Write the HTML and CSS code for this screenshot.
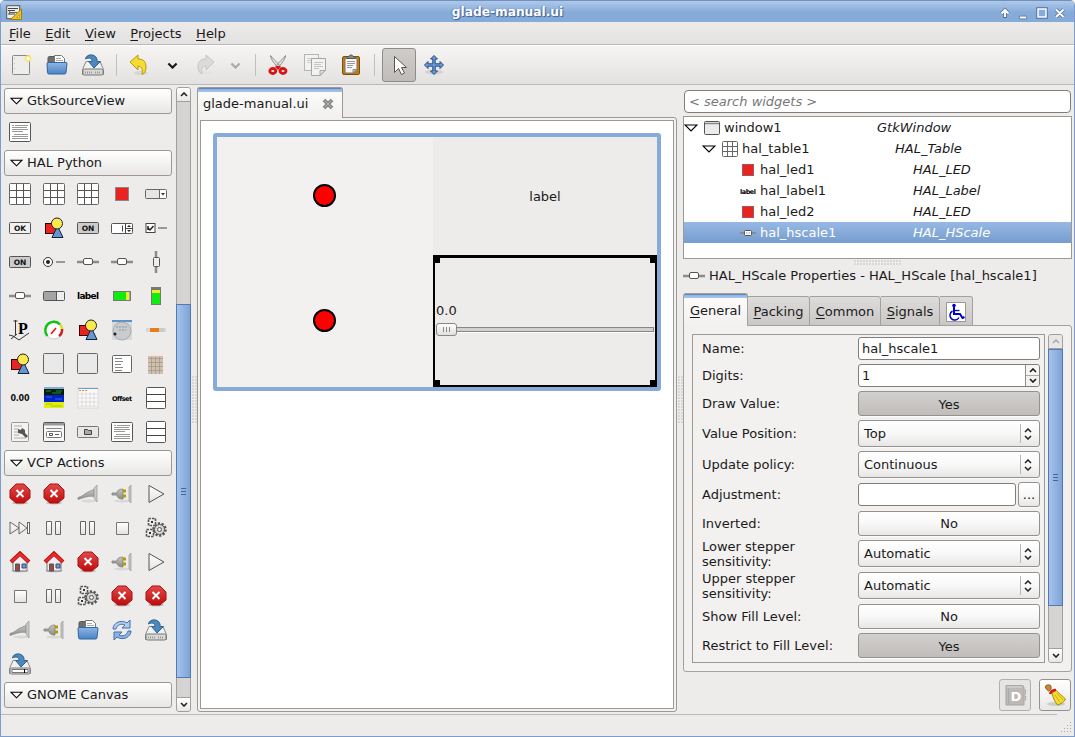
FILE: index.html
```html
<!DOCTYPE html>
<html lang="en">
<head>
<meta charset="utf-8">
<title>glade-manual.ui</title>
<link rel="stylesheet" href="styles.css">
</head>
<body>
<svg class="defs" aria-hidden="true">
<defs>
<linearGradient id="gw" x1="0" y1="0" x2="0" y2="1"><stop offset="0" stop-color="#fff"/><stop offset="1" stop-color="#e2e2e2"/></linearGradient>
<linearGradient id="gb" x1="0" y1="0" x2="0" y2="1"><stop offset="0" stop-color="#8fb5e3"/><stop offset="1" stop-color="#4a83c6"/></linearGradient>
<linearGradient id="gr" x1="0" y1="0" x2="0" y2="1"><stop offset="0" stop-color="#e04a4a"/><stop offset="1" stop-color="#c00c0c"/></linearGradient>
<linearGradient id="gg" x1="0" y1="0" x2="0" y2="1"><stop offset="0" stop-color="#c4c6c2"/><stop offset="1" stop-color="#8b8d88"/></linearGradient>
</defs>
<symbol id="down" viewBox="0 0 14 8"><path d="M1 1H13L7 7Z" fill="#fff" stroke="#000" stroke-width="1.2"/></symbol>
<symbol id="source" viewBox="0 0 22 22"><rect x=".5" y="1.500" width="21" height="19" rx="1" fill="#fff" stroke="#555753"/><path d="M3 4.500h2M6 4.500h13M3 6.500h15M3 8.500h16M3 10.500h11M5 13.500h14M3 15.500h16M3 17.500h16" stroke="#999"/></symbol>
<symbol id="grid" viewBox="0 0 22 22"><rect x=".5" y=".5" width="21" height="21" rx="1" fill="#fff" stroke="#666"/><path d="M7.500 1v20M14.500 1v20M1 7.500h20M1 14.500h20" stroke="#555"/></symbol>
<symbol id="grid16" viewBox="0 0 16 16"><rect x=".5" y=".5" width="15" height="15" rx="1" fill="#fff" stroke="#666"/><path d="M5.500 1v14M10.500 1v14M1 5.500h14M1 10.500h14" stroke="#666"/></symbol>
<symbol id="led" viewBox="0 0 22 22"><rect x="4.500" y="4.500" width="13" height="13" fill="#e92222" stroke="#888"/></symbol>
<symbol id="led16" viewBox="0 0 16 16"><rect x="2.500" y="2.500" width="11" height="11" fill="#e92222" stroke="#a55"/></symbol>
<symbol id="combo" viewBox="0 0 22 22"><rect x=".5" y="6.500" width="21" height="9" rx="1" fill="#e6e6e6" stroke="#666"/><path d="M15 7h6v8h-6z" fill="#fff"/><path d="M14.500 7v8" stroke="#666"/><path d="M16 10h4l-2 2.500z" fill="#333"/></symbol>
<symbol id="ok" viewBox="0 0 22 22"><rect x=".5" y="5.500" width="21" height="11" rx="1" fill="#f1f1f1" stroke="#555"/></symbol>
<symbol id="on" viewBox="0 0 22 22"><rect x=".5" y="5.500" width="21" height="11" rx="1" fill="#ccc" stroke="#555"/></symbol>
<symbol id="shapes" viewBox="0 0 22 22"><rect x="2.500" y="6.500" width="11" height="10" fill="#e92222" stroke="#300"/><path d="M14.500 9L20 20.500H9Z" fill="#6496d2" stroke="#123"/><circle cx="14" cy="6.500" r="5.500" fill="#fce94f" stroke="#222"/></symbol>
<symbol id="spin" viewBox="0 0 22 22"><rect x=".5" y="6.500" width="21" height="10" rx="1" fill="#fff" stroke="#555"/><path d="M14.500 7v9M15 11.500h6M11.500 8.500v6" stroke="#444"/><path d="M16 10l2-2 2 2zM16 13l2 2 2-2z" fill="#222"/></symbol>
<symbol id="check" viewBox="0 0 22 22"><rect x="1" y="6.500" width="9" height="9" fill="#fff" stroke="#444"/><path d="M3 11l2 2 3.500-4M3 9v4" stroke="#222" stroke-width="1.500" fill="none"/><path d="M13 11h9" stroke="#999" stroke-width="2"/></symbol>
<symbol id="radio" viewBox="0 0 22 22"><circle cx="5" cy="11" r="4.500" fill="#fff" stroke="#333"/><circle cx="5" cy="11" r="2" fill="#222"/><path d="M13 11h9" stroke="#999" stroke-width="2"/></symbol>
<symbol id="hscale" viewBox="0 0 22 22"><path d="M0 11h22" stroke="#8b8b8b" stroke-width="2.500"/><rect x="6.500" y="7.500" width="9" height="6" rx="1.500" fill="#fff" stroke="#555"/></symbol>
<symbol id="hscale16" viewBox="0 0 16 16"><path d="M0 8h16" stroke="#8b8b8b" stroke-width="2"/><rect x="4.500" y="5.500" width="7" height="5" rx="1" fill="#fff" stroke="#555"/><path d="M6 8h4" stroke="#999" stroke-dasharray="1 .5"/></symbol>
<symbol id="vscale" viewBox="0 0 22 22"><path d="M11 0v22" stroke="#8b8b8b" stroke-width="2.500"/><rect x="8.500" y="6.500" width="6" height="9" rx="1" fill="#eee" stroke="#555"/></symbol>
<symbol id="progress" viewBox="0 0 22 22"><rect x=".5" y="6.500" width="21" height="9" rx="1" fill="#eee" stroke="#555"/><path d="M1 7h12v8H1z" fill="#a4a4a4"/><path d="M13.500 7v8" stroke="#555"/></symbol>
<symbol id="hbar" viewBox="0 0 22 22"><path d="M2 6h18v10H2z" fill="#777"/><path d="M3 7h12v8H3z" fill="#10ec10"/><path d="M15 7h3v8h-3z" fill="#ee2"/><path d="M18 7h1v8h-1z" fill="#aaa"/></symbol>
<symbol id="vbar" viewBox="0 0 22 22"><path d="M6 2h10v18H6z" fill="#777"/><path d="M7 8h8v11H7z" fill="#10ec10"/><path d="M7 5h8v3H7z" fill="#ee2"/></symbol>
<symbol id="plot" viewBox="0 0 22 22"><path d="M6.500 1v15M4.500 2h4M0 16l4 1 6 4 10-7M2 20l6-5" fill="none" stroke="#333"/></symbol>
<symbol id="meter" viewBox="0 0 22 22"><circle cx="11" cy="11" r="9" fill="#fff" stroke="#ccc"/><path d="M4.500 17A8 8 0 1 1 17 5.500" fill="none" stroke="#12c412" stroke-width="2.500"/><path d="M17 5.500A8 8 0 0 1 19 10" fill="none" stroke="#dd2" stroke-width="2.500"/><path d="M19 10A8 8 0 0 1 16 17" fill="none" stroke="#c22" stroke-width="2.500"/><path d="M8 15l5-6" stroke="#e11" stroke-width="1.500"/></symbol>
<symbol id="dial" viewBox="0 0 22 22"><path d="M1 1h20v20H1z" fill="#d4dae0"/><path d="M1 1h20v2H1z" fill="#5f91ce"/><circle cx="11" cy="12" r="9" fill="#c9cbcc" stroke="#aaa"/><path d="M5 8h12M8 11h7" stroke="#8794a5" stroke-dasharray="2 1"/><circle cx="4" cy="15" r="1.500" fill="#222"/></symbol>
<symbol id="orange" viewBox="0 0 22 22"><path d="M1 9h20v4H1z" fill="#dbd6d1"/><path d="M5 9h9v4H5z" fill="#e87e15"/><path d="M14 9h5v4h-5z" fill="#c7ccd0"/></symbol>
<symbol id="box" viewBox="0 0 22 22"><rect x=".5" y=".5" width="20" height="20" rx="1" fill="#e9e9e9" stroke="#666"/></symbol>
<symbol id="list" viewBox="0 0 22 22"><rect x="1.500" y="2.500" width="19" height="17" rx="1" fill="#fff" stroke="#666"/><path d="M4 5.500h7M4 8.500h8M4 11.500h6M4 14.500h8M4 17.500h7" stroke="#888"/></symbol>
<symbol id="calc" viewBox="0 0 22 22"><path d="M3 1h15v20H3z" fill="#cfc1b0"/><path d="M3 1h15v2H3z" fill="#f6e6de"/><path d="M3 5.500h15M3 9.500h15M3 13.500h15M3 17.500h15M6.500 4v17M10.500 4v17M14.500 4v17" stroke="#a09385" stroke-width=".7"/></symbol>
<symbol id="dro" viewBox="0 0 22 22"><path d="M1 1h20v8H1z" fill="#061a0c"/><path d="M1 0h20v2H1z" fill="#82add8"/><path d="M1 8h20v7H1z" fill="#0420c8"/><path d="M1 15h20v6H1z" fill="#e1ed10"/><path d="M3 4h5M13 4h6M9 6h9" stroke="#0b9b3b" stroke-width="1.200"/><path d="M3 10h6M12 12h7" stroke="#2874d9" stroke-width="1.200"/><path d="M3 17h6M8 19h11" stroke="#9fc910"/></symbol>
<symbol id="cal" viewBox="0 0 22 22"><path d="M1 1h20v20H1z" fill="#fafafa" stroke="#c9c9c9" stroke-width=".6"/><path d="M1 1h20v1H1z" fill="#6f9cd1"/><path d="M2 3.500h9" stroke="#e97f55" stroke-dasharray="2 1"/><path d="M2 7h18M2 11h18M2 15h18M2 19h18M5 5v15M9 5v15M13 5v15M17 5v15" stroke="#cfcfcf" stroke-width=".6"/></symbol>
<symbol id="vbox" viewBox="0 0 22 22"><rect x="1.500" y=".5" width="19" height="21" rx="1" fill="#fff" stroke="#555"/><path d="M2 7.500h18M2 14.500h18" stroke="#444"/></symbol>
<symbol id="tool" viewBox="0 0 22 22"><rect x="2.500" y="1.500" width="17" height="19" rx="1" fill="#f3f3f3" stroke="#999"/><path d="M5 5h8M5 8h4M5 11h4M5 14h5M5 17h12" stroke="#aaa"/><path d="M9 8l3 1 1-2 3 2v3l3 3-2 2-4-4-4-1z" fill="#555"/></symbol>
<symbol id="dialog" viewBox="0 0 22 22"><rect x=".5" y="1.500" width="21" height="19" rx="1" fill="#f7f7f7" stroke="#555"/><path d="M1 2h20v2.500H1z" fill="#999"/><path d="M3 7.500h16" stroke="#888"/><rect x="3.500" y="10.500" width="15" height="6" rx="1" fill="#fff" stroke="#777"/><path d="M6.500 12.500h3v2h-3zM12 13.500h4" fill="none" stroke="#555"/></symbol>
<symbol id="filebtn" viewBox="0 0 22 22"><rect x=".5" y="5.500" width="21" height="11" rx="1" fill="#e6e6e6" stroke="#777"/><path d="M7.500 13.500v-5h3l1 1h3v4z" fill="#aaa" stroke="#444"/></symbol>
<symbol id="stop" viewBox="0 0 22 22"><ellipse cx="11" cy="20" rx="8" ry="1.500" fill="#bbb"/><path d="M7 1h8l6 6v8l-6 5H7l-6-5V7z" fill="url(#gr)" stroke="#a11"/><path d="M7.500 7l7 7M14.500 7l-7 7" stroke="#fff" stroke-width="2"/></symbol>
<symbol id="cable" viewBox="0 0 22 22"><ellipse cx="12" cy="18" rx="8" ry="1.500" fill="#d8d8d6"/><path d="M1 14.500c4-1 6-3 9-5l7-3v7c-5-1-10 1-16 3z" fill="url(#gg)" stroke="#888" stroke-width=".7"/><path d="M17 5l3-3v17l-3-4z" fill="#c8cac6" stroke="#999" stroke-width=".7"/></symbol>
<symbol id="plug" viewBox="0 0 22 22"><ellipse cx="11" cy="18" rx="8" ry="1.500" fill="#d8d8d6"/><path d="M1 10h5c0-3 3-4 6-4v10c-3 0-6-1-6-4H1z" fill="url(#gg)" stroke="#777" stroke-width=".7"/><path d="M12 8h3M12 13h3" stroke="#b89a00" stroke-width="3"/><path d="M18 4l2-2v18l-2-2z" fill="#c8cac6" stroke="#999" stroke-width=".7"/></symbol>
<symbol id="play" viewBox="0 0 22 22"><path d="M4 2.500l15 8.500-15 8.500z" fill="url(#gw)" stroke="#555753"/></symbol>
<symbol id="next" viewBox="0 0 22 22"><path d="M1 5l9 6-9 6zM10 5l8 6-8 6z" fill="url(#gw)" stroke="#666"/><rect x="18.500" y="5.500" width="2" height="11" fill="#fff" stroke="#666"/></symbol>
<symbol id="pause" viewBox="0 0 22 22"><path d="M3.500 4.500h5v13h-5zM12.500 4.500h5v13h-5z" fill="url(#gw)" stroke="#666"/></symbol>
<symbol id="sq" viewBox="0 0 22 22"><path d="M5.500 5.500h12v12h-12z" fill="url(#gw)" stroke="#777"/></symbol>
<symbol id="gears" viewBox="0 0 22 22"><g fill="#eee" stroke="#555"><circle cx="14.500" cy="12.500" r="6" stroke-width="2.500" stroke-dasharray="2.200 1.500"/><circle cx="14.500" cy="12.500" r="5" fill="#d6d8d4"/><circle cx="14.500" cy="12.500" r="2"/><rect x="3.500" y="1.500" width="7" height="7" stroke-width="1.600" stroke-dasharray="2.500 1"/><rect x="1.500" y="12.500" width="7" height="7" stroke-width="1.600" stroke-dasharray="2.500 1"/></g><path d="M6 4h2v2H6zM4 15h2v2H4z" fill="#333"/></symbol>
<symbol id="home" viewBox="0 0 22 22"><ellipse cx="11" cy="20" rx="9" ry="1.500" fill="#ccc"/><path d="M4 9l7-6 7 6v11H4z" fill="#eee" stroke="#777"/><path d="M6.500 13h4v7h-4z" fill="#9a4945" stroke="#555"/><path d="M13 13h4v4h-4z" fill="#6d9ad0" stroke="#447"/><path d="M2 11l9-8.500L20 11" fill="none" stroke="#a11" stroke-width="4"/><path d="M2.500 10.500L11 3l8.500 7.500" fill="none" stroke="#ef2929" stroke-width="2.500"/></symbol>
<symbol id="open" viewBox="0 0 22 22"><path d="M2 4q0-1.500 1.500-1.500h5l1 2H18V18H2z" fill="#6d706b" stroke="#555"/><path d="M8.500 1.500h7l3 3V12h-10z" fill="#fff" stroke="#777"/><path d="M10 4.500h5M10 6.500h7" stroke="#aaa"/><path d="M1 9.500q0-1 1-1h18q1 0 1 1l-1 9q0 1.500-1.500 1.500H3q-1.500 0-1.500-1.500z" fill="url(#gb)" stroke="#3465a4"/></symbol>
<symbol id="refresh" viewBox="0 0 22 22"><path d="M2 10C2 4 10 0 16 4l3-3v8h-8l3-3C10 4 6 6 5 10z" fill="#b4cde9" stroke="#3c6eb4"/><path d="M20 12c0 6-8 10-14 6l-3 3v-8h8l-3 3c4 2 8 0 9-4z" fill="#8fb3df" stroke="#3c6eb4"/></symbol>
<symbol id="save" viewBox="0 0 22 22"><path d="M4 7.500h14l3.500 8v5H.5v-5z" fill="#f1f2f0" stroke="#888"/><rect x="1" y="15" width="20" height="6" rx="1.500" fill="#d9dad7" stroke="#777"/><path d="M3 18.500h8M13 18.500h6" stroke="#999" stroke-width="2" stroke-dasharray="1 1"/><path d="M3.500 5C4 0 13-1 15 5v2.500h3.500L12 14 6.500 7.500H10C10 4 7 3 3.500 5z" fill="#4c88bd" stroke="#30648f"/></symbol>
<symbol id="saveas" viewBox="0 0 22 22"><path d="M4 7.500h14l3.500 8v5H.5v-5z" fill="#f1f2f0" stroke="#888"/><rect x="1" y="15" width="20" height="6" rx="1.500" fill="#d9dad7" stroke="#777"/><path d="M3 16.500h16v3H3z" fill="#fff" stroke="#777"/><path d="M15.500 16v4" stroke="#000"/><path d="M3.500 5C4 0 13-1 15 5v2.500h3.500L12 14 6.500 7.500H10C10 4 7 3 3.500 5z" fill="#4c88bd" stroke="#30648f"/></symbol>
<symbol id="new" viewBox="0 0 22 22"><rect x="2.500" y="1.500" width="17" height="19" rx="1" fill="#ededeb" stroke="#888"/><path d="M4.500 4v15" stroke="#bbb" stroke-dasharray="1 4"/><circle cx="18" cy="4.500" r="2.500" fill="#fffef0" stroke="#f6e768" stroke-width="1.500"/></symbol>
<symbol id="undo" viewBox="0 0 22 22"><ellipse cx="13" cy="19" rx="7" ry="2" fill="#d5d5d3"/><path d="M2 8l8-7v4c6 0 8 3 8 8 0 3-1 6-4 7.500 1-5 0-8-4-8.500v4z" fill="#f5dc31" stroke="#b79b05"/></symbol>
<symbol id="redo" viewBox="0 0 22 22"><ellipse cx="9" cy="19" rx="7" ry="1.500" fill="#e2e2e0"/><path d="M18 8l-8-7v4c-6 0-8 3-8 8 0 3 1 5 4 7-1-5 0-8 4-8v4z" fill="#dadcd9" stroke="#c4c6c3"/></symbol>
<symbol id="cut" viewBox="0 0 22 22"><path d="M3.500 1.500c0 4 5 9 8 13l2-2C10 8 6 5 3.500 1.500zM18.500 1.500c0 4-5 9-8 13l-2-2c3.500-4.500 7.500-7.500 10-11z" fill="#e6e6e4" stroke="#8b8d89"/><path d="M8 13l3-1.500L14 13l-3 3z" fill="#d81414"/><ellipse cx="5.800" cy="17" rx="3" ry="2.500" fill="none" stroke="#d81414" stroke-width="2.800"/><ellipse cx="16" cy="17" rx="3" ry="2.500" fill="none" stroke="#d81414" stroke-width="2.800"/></symbol>
<symbol id="copy" viewBox="0 0 22 22"><rect x=".5" y=".5" width="14" height="16" fill="#f2f2f0" stroke="#b5b5b3"/><path d="M3 4.500h9M3 6.500h7M3 8.500h9" stroke="#d0d0ce"/><path d="M7.500 4.500h14v12l-5 5h-9z" fill="#f2f2f0" stroke="#a5a5a3"/><path d="M10 8.500h9M10 10.500h7M10 12.500h9M10 14.500h5" stroke="#c5c5c3"/><path d="M21 16.500h-5v5z" fill="#ddd" stroke="#aaa"/></symbol>
<symbol id="paste" viewBox="0 0 22 22"><rect x="2.500" y="2.500" width="17" height="18" rx="1.500" fill="#c17d11" stroke="#7e4f05"/><path d="M5 4.500h12v11l-4 3.500H5z" fill="#f7f7f5" stroke="#777"/><path d="M7 7.500h8M7 9.500h8M7 11.500h6M7 13.500h5" stroke="#999"/><path d="M17 15.500h-4V19z" fill="#ccc" stroke="#888"/><path d="M7 4.500v-2h2c0-2 4-2 4 0h2v2z" fill="#888a85" stroke="#555"/></symbol>
<symbol id="pointer" viewBox="0 0 22 22"><path d="M6.500 2.500v16l4-4 3 6 3-1.500-3-5.500h5z" fill="#fff" stroke="#555"/></symbol>
<symbol id="move" viewBox="0 0 22 22"><ellipse cx="11" cy="18" rx="9" ry="2.500" fill="#d2d2d0"/><path d="M11 1.500l3.500 3.500h-2.300v4.800H17V7.500l3.500 3.500-3.500 3.500v-2.300h-4.800V17h2.300L11 20.500 7.500 17h2.300v-4.800H5v2.300L1.500 11 5 7.500v2.300h4.800V5H7.500z" fill="#6a9bd8" stroke="#204a87" stroke-linejoin="round"/></symbol>
<symbol id="window" viewBox="0 0 16 16"><rect x=".5" y="1.500" width="15" height="13" rx="1" fill="#ececec" stroke="#555"/><path d="M1 3.500h14" stroke="#888" stroke-width="1.500"/></symbol>
<symbol id="wheel" viewBox="0 0 20 20"><path d="M.5.5h19v19H.5z" fill="#fff" stroke="#999"/><circle cx="8" cy="3.500" r="1.800" fill="#00c"/><path d="M8 5v7h6l2.500 4 2-1" fill="none" stroke="#00c" stroke-width="2"/><path d="M8.500 8.500h5" stroke="#00c" stroke-width="1.300"/><path d="M6.500 9a4.800 4.800 0 1 0 6.500 6.500" fill="none" stroke="#00c" stroke-width="1.500"/></symbol>
<symbol id="upd" viewBox="0 0 8 12"><path d="M1 4l3-3 3 3M1 8l3 3 3-3" fill="none" stroke="#222" stroke-width="1.500"/></symbol>
<symbol id="cu" viewBox="0 0 8 5"><path d="M1 4l3-3 3 3" fill="none" stroke="currentColor" stroke-width="1.600"/></symbol>
<symbol id="cd" viewBox="0 0 8 5"><path d="M1 1l3 3 3-3" fill="none" stroke="currentColor" stroke-width="1.600"/></symbol>
</svg>

<div class="win">
  <header class="title">
    <svg class="app" viewBox="0 0 16 16"><rect x=".7" y=".7" width="13" height="13" fill="#eee" stroke="#555"/><path d="M2 3.500h10M2 5.500h7M2 9h7" stroke="#444"/><path d="M3.500 5.500v4M3 7.500h8" stroke="#666" fill="none"/><path d="M4.500 14.500L15.500 4v10.500z" fill="#e9c62b" stroke="#a67f05"/><path d="M10.500 12.500h3v-3z" fill="#f9e98c" stroke="#b89313" stroke-width=".7"/></svg>
    <span class="title-text">glade-manual.ui</span>
    <svg class="wbtns" viewBox="0 0 72 16"><g stroke="#4b6d9c" stroke-width="3.600" fill="none"><path d="M9 13V5M5.500 8.500L9 5l3.500 3.500M23.500 12.500h7M60 4.500l7.500 7.500M67.500 4.500L60 12"/></g><rect x="42" y="4" width="8" height="8" fill="none" stroke="#4b6d9c" stroke-width="3.400"/><g stroke="#fff" stroke-width="2.100" fill="none"><path d="M9 12V5M5.500 8.500L9 5l3.500 3.500M24 12.500h6M60 4.500l7.500 7.500M67.500 4.500L60 12"/><rect x="42" y="4" width="8" height="8" fill="#87abd9" stroke-width="1.500"/></g></svg>
  </header>
  <nav class="menu"><span><u>F</u>ile</span><span><u>E</u>dit</span><span><u>V</u>iew</span><span><u>P</u>rojects</span><span><u>H</u>elp</span></nav>
  <div class="toolbar">
    <svg class="tb i-new"><use href="#new"/></svg><svg class="tb i-open"><use href="#open"/></svg><svg class="tb i-save"><use href="#save"/></svg>
    <i class="sep s1"></i>
    <svg class="tb i-undo"><use href="#undo"/></svg><svg class="ch c1"><use href="#cd"/></svg>
    <svg class="tb i-redo"><use href="#redo"/></svg><svg class="ch c2"><use href="#cd"/></svg>
    <i class="sep s2"></i>
    <svg class="tb i-cut"><use href="#cut"/></svg><svg class="tb i-copy"><use href="#copy"/></svg><svg class="tb i-paste"><use href="#paste"/></svg>
    <i class="sep s3"></i>
    <span class="toggle"><svg class="tb"><use href="#pointer"/></svg></span>
    <svg class="tb i-move"><use href="#move"/></svg>
  </div>
  <main class="main">
    <aside class="palette">
      <div class="head"><svg><use href="#down"/></svg>GtkSourceView</div>
      <div class="icons"><svg><use href="#source"/></svg></div>
      <div class="head"><svg><use href="#down"/></svg>HAL Python</div>
      <div class="icons">
        <svg><use href="#grid"/></svg><svg><use href="#grid"/></svg><svg><use href="#grid"/></svg><svg><use href="#led"/></svg><svg><use href="#combo"/></svg>
        <svg><use href="#ok"/><text x="11" y="14" class="tiny">OK</text></svg><svg><use href="#shapes"/></svg><svg><use href="#on"/><text x="11" y="14" class="tiny">ON</text></svg><svg><use href="#spin"/></svg><svg><use href="#check"/></svg>
        <svg><use href="#on"/><text x="11" y="14" class="tiny">ON</text></svg><svg><use href="#radio"/></svg><svg><use href="#hscale"/></svg><svg><use href="#hscale"/></svg><svg><use href="#vscale"/></svg>
        <svg><use href="#hscale"/></svg><svg><use href="#progress"/></svg><svg><text x="11" y="14" class="lbl" textLength="22">label</text></svg><svg><use href="#hbar"/></svg><svg><use href="#vbar"/></svg>
        <svg><use href="#plot"/><text x="9" y="15" class="serif">P</text></svg><svg><use href="#meter"/></svg><svg><use href="#shapes"/></svg><svg><use href="#dial"/></svg><svg><use href="#orange"/></svg>
        <svg><use href="#shapes"/></svg><svg><use href="#box"/></svg><svg><use href="#box"/></svg><svg><use href="#list"/></svg><svg><use href="#calc"/></svg>
        <svg><text x="11" y="14" class="zero" textLength="19">0.00</text></svg><svg><use href="#dro"/></svg><svg><use href="#cal"/></svg><svg><text x="11" y="13.500" class="micro" textLength="20">Offset</text></svg><svg><use href="#vbox"/></svg>
        <svg><use href="#tool"/></svg><svg><use href="#dialog"/></svg><svg><use href="#filebtn"/></svg><svg><use href="#source"/></svg><svg><use href="#vbox"/></svg>
      </div>
      <div class="head"><svg><use href="#down"/></svg>VCP Actions</div>
      <div class="icons">
        <svg><use href="#stop"/></svg><svg><use href="#stop"/></svg><svg><use href="#cable"/></svg><svg><use href="#plug"/></svg><svg><use href="#play"/></svg>
        <svg><use href="#next"/></svg><svg><use href="#pause"/></svg><svg><use href="#pause"/></svg><svg><use href="#sq"/></svg><svg><use href="#gears"/></svg>
        <svg><use href="#home"/></svg><svg><use href="#home"/></svg><svg><use href="#stop"/></svg><svg><use href="#plug"/></svg><svg><use href="#play"/></svg>
        <svg><use href="#sq"/></svg><svg><use href="#pause"/></svg><svg><use href="#gears"/></svg><svg><use href="#stop"/></svg><svg><use href="#stop"/></svg>
        <svg><use href="#cable"/></svg><svg><use href="#plug"/></svg><svg><use href="#open"/></svg><svg><use href="#refresh"/></svg><svg><use href="#save"/></svg>
        <svg><use href="#saveas"/></svg>
      </div>
      <div class="head"><svg><use href="#down"/></svg>GNOME Canvas</div>
    </aside>
    <div class="scroll sc-left"><b class="up"><svg><use href="#cu"/></svg></b><i class="gap"></i><i class="thumb"></i><i class="gap2"></i><b class="dn"><svg><use href="#cd"/></svg></b></div>
    <i class="grip-v g-left"></i>
    <section class="center">
      <div class="doc-tab"><span>glade-manual.ui</span><svg viewBox="0 0 12 12"><path d="M2 2l8 8M10 2l-8 8" stroke="#777" stroke-width="3.600"/><path d="M2.500 2.500l7 7M9.500 2.500l-7 7" stroke="#b0b0ae" stroke-width="1.200"/></svg></div>
      <div class="page"><div class="paper">
        <div class="design">
          <div class="cell led"><i></i></div><div class="cell lab">label</div>
          <div class="cell led"><i></i></div>
          <div class="cell sel"><b></b><b></b><b></b><b></b>
            <span class="val">0.0</span>
            <div class="slider"><span class="knob"></span><span class="track"></span></div>
          </div>
        </div>
      </div></div>
    </section>
    <i class="grip-v g-right"></i>
    <section class="side">
      <div class="search">&lt; search widgets &gt;</div>
      <div class="tree">
        <div class="row l0"><svg class="ar"><use href="#down"/></svg><svg class="ic"><use href="#window"/></svg><span>window1</span><em>GtkWindow</em></div>
        <div class="row l1"><svg class="ar"><use href="#down"/></svg><svg class="ic"><use href="#grid16"/></svg><span>hal_table1</span><em>HAL_Table</em></div>
        <div class="row l2"><svg class="ic"><use href="#led16"/></svg><span>hal_led1</span><em>HAL_LED</em></div>
        <div class="row l2"><svg class="ic"><text x="8" y="10.500" class="micro" textLength="16">label</text></svg><span>hal_label1</span><em>HAL_Label</em></div>
        <div class="row l2"><svg class="ic"><use href="#led16"/></svg><span>hal_led2</span><em>HAL_LED</em></div>
        <div class="row l2 on"><svg class="ic"><use href="#hscale16"/></svg><span>hal_hscale1</span><em>HAL_HScale</em></div>
      </div>
      <i class="grip-h"></i>
      <div class="ptitle"><svg><use href="#hscale"/></svg>HAL_HScale Properties - HAL_HScale [hal_hscale1]</div>
      <div class="tabs"><span class="tab act"><u>G</u>eneral</span><span class="tab t2"><u>P</u>acking</span><span class="tab t3"><u>C</u>ommon</span><span class="tab t4"><u>S</u>ignals</span><span class="tab t5"><svg><use href="#wheel"/></svg></span></div>
      <div class="props">
        <div class="form">
          <label>Name:</label><div class="entry">hal_hscale1</div>
          <label>Digits:</label><div class="entry spin">1<span><svg><use href="#cu"/></svg><svg><use href="#cd"/></svg></span></div>
          <label>Draw Value:</label><div class="btn down">Yes</div>
          <label>Value Position:</label><div class="btn select">Top<svg><use href="#upd"/></svg></div>
          <label>Update policy:</label><div class="btn select">Continuous<svg><use href="#upd"/></svg></div>
          <label>Adjustment:</label><div class="pair"><div class="entry"></div><div class="btn dots">...</div></div>
          <label>Inverted:</label><div class="btn">No</div>
          <label class="two">Lower stepper<br>sensitivity:</label><div class="btn select">Automatic<svg><use href="#upd"/></svg></div>
          <label class="two">Upper stepper<br>sensitivity:</label><div class="btn select">Automatic<svg><use href="#upd"/></svg></div>
          <label>Show Fill Level:</label><div class="btn">No</div>
          <label>Restrict to Fill Level:</label><div class="btn down">Yes</div>
        </div>
        <div class="scroll sc-right"><b class="up off"><svg><use href="#cu"/></svg></b><i class="thumb"></i><i class="gap2"></i><b class="dn"><svg><use href="#cd"/></svg></b></div>
      </div>
      <div class="actions">
        <span class="abtn dis"><svg viewBox="0 0 22 22"><path d="M2 1.500h17l1 2V21H2z" fill="#bcb9b7" stroke="#aaa7a5"/><path d="M3 3h15" stroke="#ddd"/><path d="M4.500 4v17M20 6h1.500v4H20M20 12h1.500v4H20" stroke="#aaa" fill="none"/><text x="12" y="16.500" class="dd">D</text></svg></span>
        <span class="abtn"><svg viewBox="0 0 22 22"><ellipse cx="12" cy="20" rx="9" ry="2" fill="#ccc"/><path d="M1.500 3q0-2 2-2h2q1.500 0 1.500 2v2.500L4.500 7Q1.500 5 1.500 3z" fill="#c98c35" stroke="#8f5902"/><path d="M8 9l4-3c2 2 4 4 9.500 9-1 3-5 5-8 6C11 18 9 14 8 9z" fill="#f3dc2e" stroke="#a48c06"/><path d="M11 11l5 7M13 9l6 7" stroke="#c9ae12"/><path d="M6 10c1-3 3-4 6-4" fill="none" stroke="#d81414" stroke-width="2.500"/></svg></span>
      </div>
    </section>
  </main>
  <footer class="status"><svg viewBox="0 0 12 12"><path d="M10 1.500h2M7 4.500h5M4 7.500h8M1 10.500h11" stroke="#aaa" stroke-dasharray="1 2"/></svg></footer>
</div>
</body>
</html>
```
FILE: styles.css
```css
* { box-sizing: border-box; }
body { margin: 0; background: #fff; font: 13px/15px "DejaVu Sans", sans-serif; color: #1a1a1a; overflow: hidden; }
svg { display: block; flex: none; }
i, b { display: block; flex: none; }
u { text-decoration: underline; text-underline-offset: 2px; text-decoration-thickness: 1px; text-decoration-skip-ink: none; }
.defs { position: absolute; width: 0; height: 0; }
.win { width: 1075px; height: 737px; display: flex; flex-direction: column; border: 1px solid #7c9ccb; border-top: 0; border-radius: 5px 5px 0 0; background: #edeceb; overflow: hidden; }

.title { height: 22px; flex: none; display: flex; align-items: center; padding: 2px 6px 0 5px; border-top: 1px solid #6f8fbe; background: linear-gradient(#afc8e9, #86abd9 55%, #86abd9); }
.app { width: 16px; height: 16px; }
.title-text { flex: 1; text-align: center; padding-right: 3px; color: #fff; font-weight: bold; font-size: 12.2px; text-shadow: 1px 1px 1px #3c5f92, -1px 0 1px #5f82b5; }
.wbtns { width: 72px; height: 16px; }

.menu { height: 23px; flex: none; display: flex; align-items: center; padding-left: 8px; background: linear-gradient(#ecebea, #e3e2e1); border-bottom: 1px solid #bbb9b7; }
.menu span { margin-right: 14.500px; }
.toolbar { height: 40px; flex: none; display: flex; align-items: center; padding: 0 0 0 9px; background: linear-gradient(#f6f5f4, #e3e2e0); border-top: 1px solid #fff; border-bottom: 1px solid #bbb9b7; }
.tb { width: 22px; height: 22px; }
.i-open, .i-save { margin-left: 14px; }
.sep { width: 1px; height: 22px; background: #c2c0be; }
.s1 { margin-left: 12px; }
.i-undo { margin-left: 11px; }
.ch { width: 11px; height: 7px; }
.c1 { margin: 0 18px 0 17px; }
.c2 { margin: 0 14px 0 12px; color: #aaa; }
.i-cut { margin-left: 11px; }
.i-copy { margin-left: 15px; }
.i-paste { margin-left: 14px; }
.s3 { margin: 0 7px 0 12px; }
.toggle { width: 34px; height: 34px; display: flex; align-items: center; justify-content: center; border: 1px solid #8e8b88; border-radius: 3px; background: linear-gradient(#cfcdcb, #bfbcb9); }
.i-move { margin-left: 7px; }

.main { height: 629px; flex: none; display: flex; }
.palette { width: 171px; padding: 3px 0 0 2px; flex: none; }
.head { width: 168px; height: 26px; margin-left: 1px; display: flex; align-items: center; padding: 0 0 1px 5px; gap: 4px; border: 1px solid #9b9895; border-radius: 3px; background: linear-gradient(#fff, #f3f3f2 50%, #e8e7e6); }
.head svg { width: 13px; height: 8px; }
.icons { display: grid; grid-template-columns: repeat(5, 34px); grid-auto-rows: 34px; place-items: center; padding: 1px 0; width: 170px; }
.icons svg { width: 22px; height: 22px; }
.tiny { font: bold 7.500px "DejaVu Sans", sans-serif; text-anchor: middle; fill: #111; }
.zero { font: bold 8px "DejaVu Sans", sans-serif; text-anchor: middle; fill: #111; }
.lbl { font: bold 9px "DejaVu Sans", sans-serif; text-anchor: middle; fill: #000; }
.micro { font: bold 6.500px "DejaVu Sans", sans-serif; text-anchor: middle; }
.serif { font: bold 16px "Liberation Serif", serif; }
.dd { font: bold 13px "DejaVu Sans", sans-serif; text-anchor: middle; fill: #fff; }

.scroll { width: 15px; flex: none; display: flex; flex-direction: column; border: 1px solid #a19e9b; border-radius: 3px; background: #d5d4d2; }
.scroll b { height: 14px; display: flex; align-items: center; justify-content: center; background: linear-gradient(#fff, #e8e7e6); color: #222; }
.scroll b svg { width: 8px; height: 5px; }
.scroll .up { border-bottom: 1px solid #a19e9b; border-radius: 2px 2px 0 0; }
.scroll .dn { border-top: 1px solid #a19e9b; border-radius: 0 0 2px 2px; }
.scroll .off { color: #aaa; background: #e8e7e6; }
.gap2 { flex: 1; }
.thumb { margin: 0 -1px; border: 1px solid #4f7ab5; background: linear-gradient(#3f68a3, #3f68a3) center 50% / 5px 1px no-repeat, linear-gradient(#3f68a3, #3f68a3) center calc(50% - 3px) / 5px 1px no-repeat, linear-gradient(#3f68a3, #3f68a3) center calc(50% + 3px) / 5px 1px no-repeat, linear-gradient(90deg, #a6c3ea, #7ea4d8); }
.sc-left { height: 625px; margin: 2px 0 0 4px; }
.sc-left .gap { height: 202px; }
.sc-left .thumb { height: 374px; }
.grip-v { width: 5px; height: 48px; background: radial-gradient(circle at 1px 1px, #c0bebc .6px, transparent .8px) 0 0 / 3px 3px; }
.g-left { margin: 291px 0 0 1px; }
.g-right { margin: 291px 0 0 1px; }

.center { width: 480px; flex: none; padding-top: 2px; }
.doc-tab { position: relative; width: 146px; height: 31px; display: flex; align-items: center; justify-content: space-between; padding: 1px 8px 0 5px; border: 1px solid #9b9895; border-bottom: 0; border-radius: 3px 3px 0 0; background: linear-gradient(#5d87bd 0 1px, #8fb3e0 1px, #a9c5ea 4px, #fbfbfa 4px, #f2f1f0); margin-bottom: -1px; }
.doc-tab svg { width: 12px; height: 12px; }
.page { height: 595px; padding: 2px; border: 1px solid #9b9895; border-radius: 0 3px 3px 3px; background: #f2f1f0; }
.paper { height: 589px; border: 1px solid #9b9895; background: #fff; padding: 12px; }
.design { width: 448px; height: 258px; border: 4px solid #86abd9; border-radius: 3px; display: grid; grid-template: 118px 132px / 216px 224px; background: #edeceb; }
.cell { display: flex; align-items: center; justify-content: center; }
.cell.led { background: #f2f1f0; }
.cell.led i { width: 23px; height: 23px; margin: 0 1px 1px 0; border: 2px solid #000; border-radius: 50%; background: #f00; }
.sel { position: relative; flex-direction: column; align-items: stretch; border: 2px solid #000; border-top-width: 3px; padding: 0 1px 4px; }
.sel b { position: absolute; width: 5px; height: 5px; background: #000; }
.sel b:nth-child(1) { left: 0; top: 0; }
.sel b:nth-child(2) { right: 0; top: 0; }
.sel b:nth-child(3) { left: 0; bottom: 0; }
.sel b:nth-child(4) { right: 0; bottom: 0; }
.val { margin-bottom: 5px; }
.slider { display: flex; align-items: center; }
.knob { width: 21px; height: 13px; border: 1px solid #888; border-radius: 3px; background: repeating-linear-gradient(90deg, #888 0 1px, transparent 1px 3px) 6px 3px / 7px 5px no-repeat, linear-gradient(#fff, #e0dfde); }
.track { flex: 1; height: 5px; border: 1px solid #888683; border-left: 0; background: #d2d1cf; box-shadow: 0 1px #fff; }

.side { width: 389px; flex: none; padding-top: 5px; }
.search { height: 23px; margin: 0 1px 3px; padding: 3px 4px; border: 1px solid #807d7a; border-radius: 4px; background: #fff; color: #777; font-style: italic; }
.tree { height: 143px; border: 1px solid #9b9895; background: #fff; }
.row { height: 21px; display: grid; align-items: center; grid-template-columns: 20px 20px 153px 1fr; }
.l1 { padding-left: 18px; }
.l2 { padding-left: 36px; }
.l2 .ic { grid-column: 2; }
.ar { width: 14px; height: 8px; }
.ic { width: 16px; height: 16px; }
.on { background: linear-gradient(#97b8e3, #769dcf); color: #fff; }
.grip-h { width: 47px; height: 5px; margin: 1px auto 0; background: radial-gradient(circle at 1px 1px, #c0bebc .6px, transparent .8px) 0 0 / 3px 3px; }
.ptitle { height: 21px; display: flex; align-items: center; gap: 4px; white-space: nowrap; }
.ptitle svg { width: 22px; height: 22px; }
.tabs { height: 33px; margin-top: 7px; display: flex; align-items: flex-end; position: relative; margin-bottom: -1px; }
.tab { height: 30px; padding-top: 2px; display: block; text-align: center; line-height: 25px; border: 1px solid #a3a09d; border-left: 0; border-radius: 0 3px 0 0; background: linear-gradient(#dddcdb, #cac8c6); white-space: nowrap; }
.act { width: 65px; height: 33px; line-height: 29px; border-left: 1px solid #a3a09d; border-bottom: 0; border-radius: 3px 3px 0 0; background: linear-gradient(#5d87bd 0 1px, #8fb3e0 1px, #a9c5ea 4px, #fbfbfa 4px, #f2f1f0); }
.t2 { width: 62px; } .t3 { width: 71px; } .t4 { width: 59px; }
.t5 { width: 33px; padding: 5px 6px; }
.t5 svg { width: 20px; height: 20px; }
.props { height: 347px; padding: 8px; display: flex; gap: 3px; border: 1px solid #a3a09d; border-radius: 0 3px 3px 3px; background: #f2f1f0; }
.form { width: 353px; height: 329px; border: 1px solid #9b9895; padding: 2px 4px 0 9px; display: grid; grid-template-columns: 156px 182px; row-gap: 4px; align-content: start; }
.form label { align-self: center; }
.form .two { height: 28px; line-height: 15px; position: relative; top: -1px; }
.entry { height: 23px; padding: 3px 3px; border: 1px solid #807d7a; border-radius: 3px; background: #fff; }
.spin { display: flex; justify-content: space-between; padding: 0 0 0 3px; line-height: 21px; }
.spin span { width: 14px; border-left: 1px solid #908d8a; display: flex; flex-direction: column; justify-content: space-around; align-items: center; background: linear-gradient(#f5f5f4 48%, #aaa 48%, #aaa 52%, #f2f1f0 52%); border-radius: 0 3px 3px 0; }
.spin svg { width: 8px; height: 5px; }
.btn { height: 25px; line-height: 24px; text-align: center; border: 1px solid #94918e; border-radius: 3px; background: linear-gradient(#fff, #f8f8f8 50%, #e8e7e6); box-shadow: 0 1px #fbfbfb; }
.down { line-height: 25px; background: linear-gradient(#d2d0ce, #c0bdba); }
.select { height: 27px; line-height: 25px; text-align: left; padding: 0 7px 0 5px; display: flex; justify-content: space-between; align-items: center; background: linear-gradient(#b9b7b5, #b9b7b5) 161px 3px / 1px 19px no-repeat, linear-gradient(#fff, #f8f8f8 50%, #e8e7e6); }
.select svg { width: 8px; height: 12px; }
.pair { display: flex; align-items: center; gap: 2px; }
.pair .entry { width: 158px; }
.dots { width: 22px; }
.sc-right { height: 329px; }
.sc-right .thumb { height: 257px; }
.actions { display: flex; justify-content: flex-end; gap: 8px; padding: 7px 1px 0 0; }
.abtn { width: 32px; height: 32px; display: flex; align-items: center; justify-content: center; border: 1px solid #94918e; border-radius: 3px; background: linear-gradient(#fff, #e8e7e6); }
.abtn svg { width: 22px; height: 22px; }
.dis { border-color: #b2b0ad; background: #e6e5e4; }
.status { flex: 1; display: flex; justify-content: flex-end; align-items: flex-end; padding: 0 2px 3px 0; background: linear-gradient(#bbb9b7, #bbb9b7) 0 0 / 1056px 1px no-repeat; }
.status svg { width: 12px; height: 12px; }
```
